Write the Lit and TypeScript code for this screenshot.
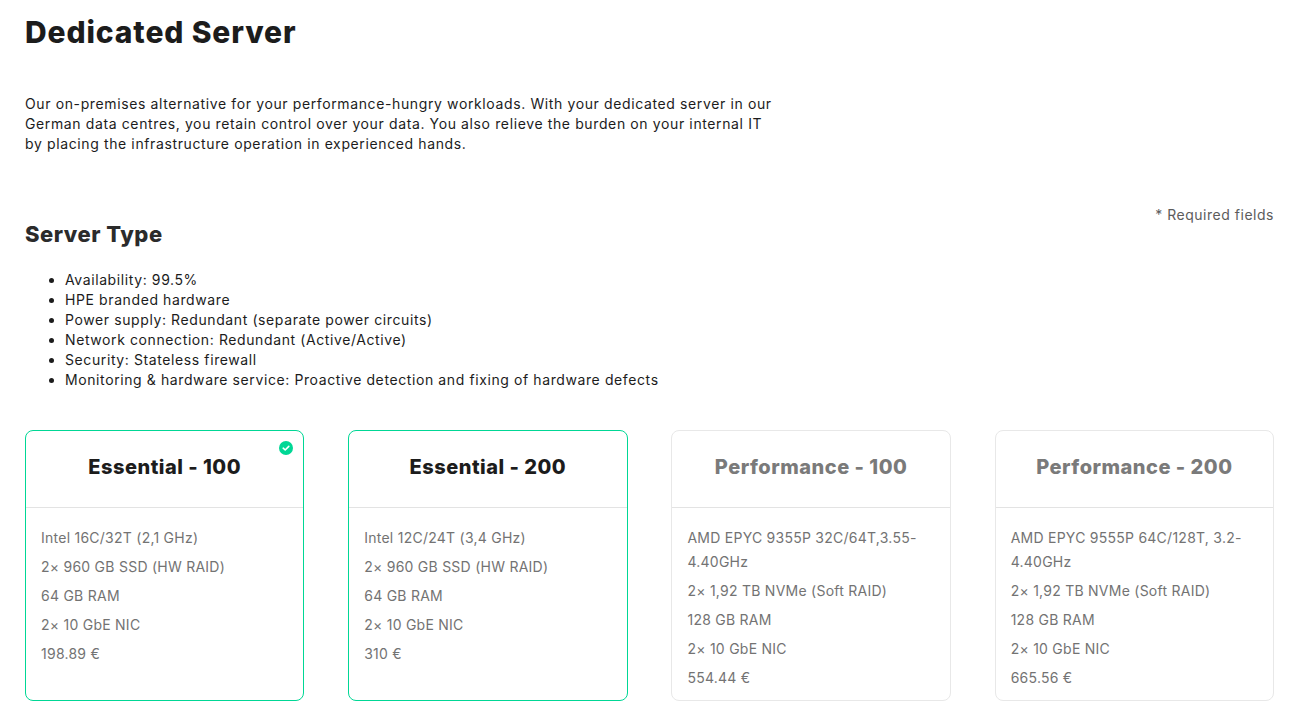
import { LitElement, html, css } from "lit";
import { customElement } from "lit/decorators.js";

interface Plan { name: string; specs: string[]; selected: boolean; active: boolean; }

const plans: Plan[] = [
  { name: "Essential - 100", selected: true, active: true, specs: ["Intel 16C/32T (2,1 GHz)", "2× 960 GB SSD (HW RAID)", "64 GB RAM", "2× 10 GbE NIC", "198.89 €"] },
  { name: "Essential - 200", selected: false, active: true, specs: ["Intel 12C/24T (3,4 GHz)", "2× 960 GB SSD (HW RAID)", "64 GB RAM", "2× 10 GbE NIC", "310 €"] },
  { name: "Performance - 100", selected: false, active: false, specs: ["AMD EPYC 9355P 32C/64T,3.55-4.40GHz", "2× 1,92 TB NVMe (Soft RAID)", "128 GB RAM", "2× 10 GbE NIC", "554.44 €"] },
  { name: "Performance - 200", selected: false, active: false, specs: ["AMD EPYC 9555P 64C/128T, 3.2-4.40GHz", "2× 1,92 TB NVMe (Soft RAID)", "128 GB RAM", "2× 10 GbE NIC", "665.56 €"] },
];

const features = [
  "Availability: 99.5%",
  "HPE branded hardware",
  "Power supply: Redundant (separate power circuits)",
  "Network connection: Redundant (Active/Active)",
  "Security: Stateless firewall",
  "Monitoring & hardware service: Proactive detection and fixing of hardware defects",
];

@customElement("app-root")
export class AppRoot extends LitElement {
  static styles = css`
    :host { display: block; box-sizing: border-box; height: 723px; overflow: hidden; padding: 0 27px 0 25px; background: #fff; font-family: Inter, "Liberation Sans", sans-serif; color: #1c1c1c; font-size: 14px; }
    h1 { margin: 0; padding-top: 13px; font-size: 30px; line-height: 38px; font-weight: 800; letter-spacing: 0.87px; color: #1c1c1c; }
    .intro { margin: 43px 0 0; width: 750px; line-height: 20px; letter-spacing: 0.62px; }
    .head { display: flex; justify-content: space-between; align-items: flex-start; margin-top: 50px; }
    h2 { margin: 16px 0 0; font-size: 22px; line-height: 28px; font-weight: 800; color: #2b2b2b; letter-spacing: 0.5px; }
    .req { line-height: 20px; color: #5c5c5c; letter-spacing: 0.52px; margin-top: 1px; }
    ul { margin: 22px 0 0; padding: 0 0 0 40px; line-height: 20px; letter-spacing: 0.6px; }
    .cards { display: grid; grid-template-columns: repeat(4, 1fr); gap: 43.9px; margin-top: 40px; height: 271px; }
    .card { position: relative; box-sizing: border-box; border: 1px solid #e8e8e8; border-radius: 8px; background: #fff; }
    .card.on { border-color: #00d795; }
    .title { box-sizing: border-box; height: 77px; border-bottom: 1px solid #e3e3e3; display: flex; align-items: center; justify-content: center; padding-bottom: 4px; font-size: 20px; font-weight: 800; color: #7a7a7a; letter-spacing: 0.5px; }
    .card.on .title { color: #1c1c1c; }
    .body { padding: 18px 15px 0; color: #737373; line-height: 24px; letter-spacing: 0.25px; }
    .body div { margin-bottom: 5px; }
    .check { position: absolute; top: 10px; right: 10px; width: 14px; height: 14px; display: block; }
  `;

  render() {
    return html`
      <h1>Dedicated Server</h1>
      <p class="intro">Our on-premises alternative for your performance-hungry workloads. With your dedicated server in our German data centres, you retain control over your data. You also relieve the burden on your internal IT by placing the infrastructure operation in experienced hands.</p>
      <div class="head"><h2>Server Type</h2><span class="req">* Required fields</span></div>
      <ul>${features.map((f) => html`<li>${f}</li>`)}</ul>
      <div class="cards">
        ${plans.map((p) => html`
          <div class="card ${p.active ? "on" : ""}">
            ${p.selected ? html`<svg class="check" viewBox="0 0 14 14"><circle cx="7" cy="7" r="7" fill="#00d795"></circle><path d="M4.2 7.2 6.2 9 9.8 5.4" fill="none" stroke="#fff" stroke-width="1.6" stroke-linecap="round" stroke-linejoin="round"></path></svg>` : ""}
            <div class="title">${p.name}</div>
            <div class="body">${p.specs.map((s) => html`<div>${s}</div>`)}</div>
          </div>`)}
      </div>
    `;
  }
}
